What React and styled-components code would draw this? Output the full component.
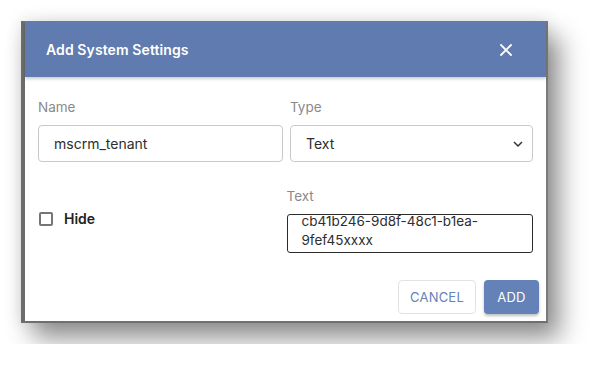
import React from 'react'
import styled, { createGlobalStyle } from 'styled-components'

const Global = createGlobalStyle`
    body {
        margin: 0;
        background: #ffffff;
        font-family: Inter, "Noto Sans", sans-serif;
    }
`

const Page = styled.div`
    padding: 21px;
`

const Dialog = styled.div`
    width: 527px;
    height: 302px;
    box-sizing: border-box;
    background: #ffffff;
    border-top: 1px solid #7a7a7a;
    border-left: 4px solid #6c6c6c;
    border-right: 2px solid #7a7a7a;
    border-bottom: 2px solid #6f6f6f;
    box-shadow: 12px 16px 24px rgba(0, 0, 0, 0.42), 0 0 16px rgba(0, 0, 0, 0.12);
    display: flex;
    flex-direction: column;
`

const Header = styled.div`
    height: 55px;
    background: #607baf;
    display: flex;
    align-items: center;
    justify-content: space-between;
    padding: 0 33px 0 21px;
    box-shadow: 0 2px 3px rgba(0, 0, 0, 0.2);
`

const Title = styled.div`
    color: #ffffff;
    font-size: 14px;
    font-weight: 600;
    letter-spacing: 0.1px;
`

const Close = styled.button`
    border: none;
    background: none;
    padding: 0;
    width: 14px;
    height: 14px;
    display: flex;
    cursor: pointer;
`

const Body = styled.div`
    padding: 22px 13px 0 13px;
    display: flex;
    flex-direction: column;
`

const Row = styled.div`
    display: flex;
    gap: ${({ gap }) => gap}px;
    margin-top: ${({ top }) => top || 0}px;
`

const Field = styled.div`
    display: flex;
    flex-direction: column;
    width: ${({ w }) => w}px;
`

const Label = styled.div`
    font-size: 13.5px;
    color: #8a8a8a;
    line-height: 16px;
    margin-bottom: ${({ mb }) => mb || 10}px;
`

const Input = styled.div`
    height: 37px;
    box-sizing: border-box;
    border: 1px solid #c9c9c9;
    border-radius: 4px;
    display: flex;
    align-items: center;
    justify-content: space-between;
    padding: 0 8px 0 15px;
    font-size: 14px;
    color: #2e2e2e;
`

const CheckWrap = styled.label`
    display: flex;
    align-items: center;
    align-self: flex-start;
    gap: 11px;
    width: 248px;
    padding-top: 24px;
    padding-left: 1px;
    font-size: 14px;
    line-height: 14px;
    font-weight: 600;
    color: #222;
`

const Box = styled.span`
    width: 14px;
    height: 14px;
    box-sizing: border-box;
    border: 2px solid #767676;
    border-radius: 2px;
`

const TextBox = styled.div`
    height: 39px;
    box-sizing: border-box;
    border: 1.5px solid #2b2b2b;
    border-radius: 3px;
    overflow: hidden;
    padding: 0 14px;
    font-size: 13.5px;
    color: #2e2e2e;
`

const Lines = styled.div`
    margin-top: -3px;
    line-height: 19px;
`

const Footer = styled.div`
    margin-top: auto;
    display: flex;
    justify-content: flex-end;
    gap: 8px;
    padding: 0 7px 7px 0;
`

const Button = styled.button`
    height: 34px;
    min-width: ${({ w }) => w}px;
    box-sizing: border-box;
    border-radius: 4px;
    font-family: Inter, "Noto Sans", sans-serif;
    font-size: 13px;
    letter-spacing: 0.2px;
    cursor: pointer;
    color: #6482b8;
    background: #ffffff;
    border: 1px solid #e2e2e2;
    ${({ primary }) => primary && `
        color: #ffffff;
        background: #6482b8;
        border: none;
        box-shadow: 0 2px 3px rgba(0, 0, 0, 0.25);
    `}
`

const App = () => (
    <Page>
        <Global />
        <Dialog>
            <Header>
                <Title>Add System Settings</Title>
                <Close aria-label="close">
                    <svg width="14" height="14" viewBox="0 0 14 14">
                        <path d="M2 2 L12 12 M12 2 L2 12" stroke="#fff" strokeWidth="1.8" strokeLinecap="round" />
                    </svg>
                </Close>
            </Header>
            <Body>
                <Row gap={7}>
                    <Field w={245}>
                        <Label>Name</Label>
                        <Input>mscrm_tenant</Input>
                    </Field>
                    <Field w={243}>
                        <Label>Type</Label>
                        <Input>
                            Text
                            <svg width="12" height="8" viewBox="0 0 12 8">
                                <path d="M2 2 L6 6 L10 2" stroke="#333" strokeWidth="1.5" fill="none" />
                            </svg>
                        </Input>
                    </Field>
                </Row>
                <Row gap={0} top={26}>
                    <CheckWrap>
                        <Box />
                        Hide
                    </CheckWrap>
                    <Field w={247}>
                        <Label>Text</Label>
                        <TextBox>
                            <Lines>cb41b246-9d8f-48c1-b1ea-<br />9fef45xxxx</Lines>
                        </TextBox>
                    </Field>
                </Row>
            </Body>
            <Footer>
                <Button w={78}>CANCEL</Button>
                <Button primary w={55}>ADD</Button>
            </Footer>
        </Dialog>
    </Page>
)

export default App
